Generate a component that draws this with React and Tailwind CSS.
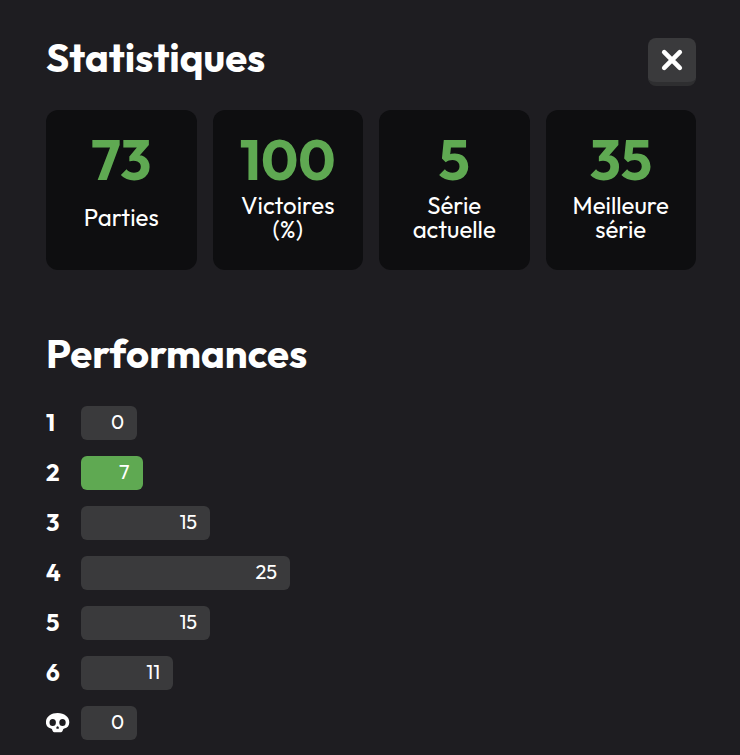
import React from 'react';

const stats = [
  { value: 73, label: 'Parties' },
  { value: 100, label: 'Victoires (%)' },
  { value: 5, label: 'Série actuelle' },
  { value: 35, label: 'Meilleure série' },
];

const performances = [
  { id: '1', count: 0 },
  { id: '2', count: 7, current: true },
  { id: '3', count: 15 },
  { id: '4', count: 25 },
  { id: '5', count: 15 },
  { id: '6', count: 11 },
  { id: 'lost', count: 0 },
];

const total = performances.reduce((sum, row) => sum + row.count, 0);

const Skull = () => (
  <svg className="h-8 w-6" viewBox="0.4 0 24 32" role="img" aria-label="Perdu">
    <path
      fill="currentColor"
      fillRule="evenodd"
      d="M12 7C5.200 7 0.300 11 0.300 16.200c0 3.500 1.700 5.600 5 6.400.8.200 1.200.5 1.300 1.100.2 1.600 1.400 2.600 3 2.600h4.800c1.600 0 2.800-1 3-2.600.1-.6.500-.9 1.300-1.100 3.300-.8 5-2.900 5-6.400C23.700 11 18.800 7 12 7ZM7.100 12.900a3.200 3.600 0 1 1 0 7.200a3.200 3.600 0 1 1 0-7.200ZM16.900 12.900a3.200 3.600 0 1 1 0 7.200a3.200 3.600 0 1 1 0-7.200ZM12 20.200c.7 0 1.300 1 1.300 1.700s-.6.900-1.300.9-1.300-.2-1.300-.9.600-1.700 1.300-1.700Z"
    />
  </svg>
);

const StatCard = ({ value, label }) => (
  <div className="flex h-40 flex-col items-center rounded-xl bg-[#0e0e10] px-5 pt-5 text-center">
    <span className="text-[56px] leading-[60px] font-bold text-[#5fa952]">{value}</span>
    <span className="mt-[3px] flex h-12 items-center text-2xl leading-6">{label}</span>
  </div>
);

const PerformanceRow = ({ id, count, current }) => {
  const percent = Math.round((count / total) * 100);

  return (
    <li className="flex h-[34px]">
      <span className="w-[35px] shrink-0 text-2xl leading-8 font-bold">
        {id === 'lost' ? <Skull /> : id}
      </span>
      <div className="h-full flex-1">
        <div
          className={`h-full min-w-14 rounded-md pr-[13px] text-right text-xl leading-8 ${
            current ? 'bg-[#5fa952]' : 'bg-[#3a3a3c]'
          }`}
          style={{ width: `${percent}%` }}
        >
          {count}
        </div>
      </div>
    </li>
  );
};

const App = () => {
  return (
    <main className="min-h-screen bg-[#1e1d21] pt-[38px] pr-11 pb-4 pl-[46px] font-[Outfit,Lato,sans-serif] text-white">
      {/* Header */}
      <header className="flex h-12 items-start justify-between">
        <h1 className="text-[40px] leading-[38px] font-bold">Statistiques</h1>
        <button
          type="button"
          aria-label="Fermer"
          className="flex size-12 items-center justify-center rounded-lg border-b-4 border-[#2e2e30] bg-[#3a3a3c]"
        >
          <svg className="size-6" viewBox="0 0 24 24" fill="none" stroke="currentColor">
            <path strokeLinecap="round" strokeWidth="4.600" d="M4.200 4.200l15.600 15.600M19.800 4.200L4.200 19.800" />
          </svg>
        </button>
      </header>

      {/* Stats */}
      <section className="mt-6 grid grid-cols-4 gap-4">
        {stats.map((stat) => (
          <StatCard key={stat.label} {...stat} />
        ))}
      </section>

      {/* Performances */}
      <section className="mt-16">
        <h2 className="text-[40px] leading-[38px] font-bold">Performances</h2>
        <ul className="mt-[34px] flex flex-col gap-4">
          {performances.map((row) => (
            <PerformanceRow key={row.id} {...row} />
          ))}
        </ul>
      </section>
    </main>
  );
};

export default App;
